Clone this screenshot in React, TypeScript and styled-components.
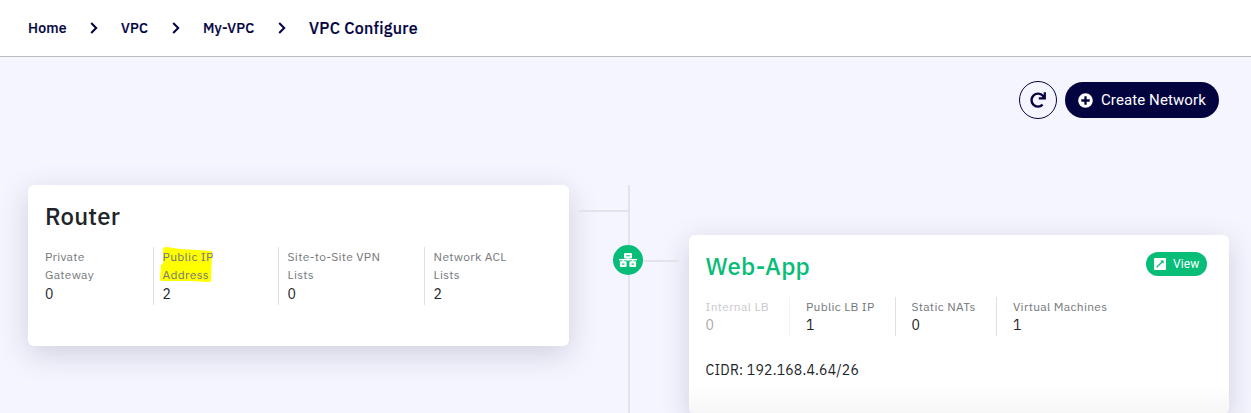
import React from "react";
import styled, { createGlobalStyle } from "styled-components";
import { FaPlusCircle } from "react-icons/fa";

const navy = "#03033f";
const green = "#07bd78";

const GlobalStyle = createGlobalStyle`
  * { box-sizing: border-box; }
  html, body { margin: 0; padding: 0; overflow: hidden; }
  body { font-family: "IBM Plex Sans", Roboto, "Noto Sans", sans-serif; }
`;

const Page = styled.div`
  height: 413px;
  overflow: hidden;
  background: #f5f5ff;
  color: #212529;
`;

const Header = styled.header`
  height: 57px;
  padding-left: 28px;
  display: flex;
  align-items: center;
  background: #fff;
  border-bottom: 1px solid #bdbdc0;
  color: ${navy};
`;

const Crumb = styled.span<{ $width: number; $current?: boolean }>`
  width: ${(p) => p.$width}px;
  font-size: ${(p) => (p.$current ? 16 : 14)}px;
  font-weight: 500;
  line-height: 20px;
  letter-spacing: ${(p) => (p.$current ? 0.3 : 0.2)}px;
  white-space: nowrap;
  -webkit-text-stroke: 0.2px ${navy};
`;

const Chevron = styled.svg`
  width: 8px;
  height: 12px;
  margin: 0 23px;
  flex: none;
`;

const Toolbar = styled.div`
  height: 128px;
  padding: 24px 32px 0 0;
  display: flex;
  justify-content: flex-end;
  gap: 8px;
`;

const RefreshButton = styled.button`
  width: 38px;
  height: 38px;
  padding: 0;
  display: grid;
  place-items: center;
  border: 1px solid ${navy};
  border-radius: 50%;
  background: transparent;
`;

const CreateButton = styled.button`
  width: 154px;
  height: 36px;
  margin-top: 1px;
  padding: 0 0 0 13px;
  display: flex;
  align-items: center;
  gap: 8px;
  border: 0;
  border-radius: 18px;
  background: ${navy};
  color: #fff;
  font: 400 15px Roboto, sans-serif;
  letter-spacing: 0.1px;
  white-space: nowrap;
`;

const Diagram = styled.main`
  padding-left: 28px;
  display: flex;
  align-items: flex-start;
`;

const Card = styled.section<{ $offset?: boolean }>`
  flex: none;
  width: ${(p) => (p.$offset ? 540 : 541)}px;
  height: ${(p) => (p.$offset ? 179 : 161)}px;
  margin-top: ${(p) => (p.$offset ? 50 : 0)}px;
  padding: 17px 22px 0 ${(p) => (p.$offset ? 16.6 : 17)}px;
  border-radius: 6px;
  background: ${(p) =>
    p.$offset ? "linear-gradient(#fff 150px, #f6f6f6 179px)" : "#fff"};
  box-shadow: 0 8px 30px rgba(30, 30, 60, 0.17);
`;

const CardHead = styled.div`
  height: 45px;
  display: flex;
  justify-content: space-between;
  align-items: flex-start;
`;

const Title = styled.h2<{ $color?: string }>`
  margin: -1px 0 0;
  font-size: 24px;
  font-weight: 500;
  line-height: 30px;
  letter-spacing: 0.2px;
  color: ${(p) => p.$color ?? "#212529"};
`;

const ViewButton = styled.button`
  width: 61px;
  height: 24px;
  padding: 0 0 0 8px;
  display: flex;
  align-items: center;
  gap: 7px;
  border: 0;
  border-radius: 12px;
  background: ${green};
  color: #fff;
  font: 400 12px Roboto, sans-serif;
  letter-spacing: 0.1px;
`;

const Stats = styled.div`
  display: flex;
`;

const Stat = styled.div<{ $width: number; $inset: number; $muted?: boolean; $last?: boolean }>`
  width: ${(p) => p.$width}px;
  padding-left: ${(p) => p.$inset}px;
  border-right: ${(p) => (p.$last ? 0 : 1)}px solid #e1e1e4;
  opacity: ${(p) => (p.$muted ? 0.4 : 1)};
`;

const Label = styled.div`
  padding-top: 1px;
  font-size: 12px;
  line-height: 18px;
  letter-spacing: 0.3px;
  color: #74777b;
  white-space: pre-line;
`;

const Value = styled.div<{ $low?: boolean }>`
  padding: ${(p) => (p.$low ? "1px 0" : "0 0 1px")};
  font-size: 14px;
  line-height: 19px;
  letter-spacing: 0.2px;
`;

const Highlighted = styled.div`
  position: relative;
  isolation: isolate;
`;

const Marker = styled.svg`
  position: absolute;
  z-index: -1;
  left: -3px;
  top: 0;
  width: 54px;
  height: 36px;
`;

const Cidr = styled.div`
  margin-top: 24px;
  font-size: 14px;
  line-height: 20px;
  letter-spacing: 0.2px;
`;

const Connector = styled.div`
  position: relative;
  flex: none;
  width: 120px;
  height: 228px;
`;

const Lines = styled.svg`
  display: block;
  width: 120px;
  height: 228px;
`;

const Badge = styled.div`
  position: absolute;
  left: 44px;
  top: 60px;
  width: 30px;
  height: 30px;
  display: grid;
  place-items: center;
  border-radius: 50%;
  background: ${green};
  color: #fff;
`;

function Separator() {
  return (
    <Chevron viewBox="0 0 8 12" fill="none" stroke={navy} strokeWidth="2">
      <path d="M1.2 1 6.2 6l-5 5" />
    </Chevron>
  );
}

function NetworkIcon() {
  return (
    <svg width="18" height="16" viewBox="0 0 18 16" fill="none" stroke="#fff">
      <path d="M6.1 2.1h5.8v3.3H6.1ZM2 10.4h4.5v3.5H2ZM11.5 10.4H16v3.5h-4.5Z" strokeWidth="2.2" strokeLinejoin="round" />
      <path d="M9 5.5v3M4.2 7.5v2M13.8 7.5v2" strokeWidth="1.5" />
      <path d="M0 7.7h18" strokeWidth="1.5" />
    </svg>
  );
}

function OpenIcon() {
  return (
    <svg width="12" height="12" viewBox="0 0 12 12" fill="none">
      <rect width="12" height="12" rx="1" fill="#fff" />
      <path d="M2.7 9.3 9 3" stroke={green} strokeWidth="1.3" />
      <path d="M6.2 2.4h3.4v3.4Z" fill={green} />
    </svg>
  );
}

export default function App() {
  return (
    <Page>
      <GlobalStyle />
      <Header>
        <Crumb $width={39}>Home</Crumb>
        <Separator />
        <Crumb $width={28}>VPC</Crumb>
        <Separator />
        <Crumb $width={52}>My-VPC</Crumb>
        <Separator />
        <Crumb $width={112} $current>VPC Configure</Crumb>
      </Header>
      <Toolbar>
        <RefreshButton aria-label="Refresh">
          <svg width="20" height="20" viewBox="0 0 20 20" fill="none" stroke={navy} strokeWidth="2.4">
            <path d="M14.6 14.7A6.5 6.5 0 1 1 14.9 5.8L16 7.6" />
            <path d="M16.8 2.2V8.3H10.8" strokeWidth="2.2" />
          </svg>
        </RefreshButton>
        <CreateButton>
          <FaPlusCircle size={15} />
          Create Network
        </CreateButton>
      </Toolbar>
      <Diagram>
        <Card>
          <CardHead>
            <Title>Router</Title>
          </CardHead>
          <Stats>
            <Stat $width={109} $inset={0}>
              <Label>{"Private\nGateway"}</Label>
              <Value $low>0</Value>
            </Stat>
            <Stat $width={125} $inset={8.6}>
              <Highlighted>
                <Marker viewBox="0 0 54 36">
                  <path d="M3 2Q3 0 6 0l14 2 17 1 15 1-1 30q0 1-3 1l-18-1-27 0Q0 34 0 32L1 18q0-1 2-1Z" fill="#ff0" />
                </Marker>
                <Label>{"Public IP\nAddress"}</Label>
              </Highlighted>
              <Value $low>2</Value>
            </Stat>
            <Stat $width={146} $inset={8.6}>
              <Label>{"Site-to-Site VPN\nLists"}</Label>
              <Value $low>0</Value>
            </Stat>
            <Stat $width={120} $inset={8.6} $last>
              <Label>{"Network ACL\nLists"}</Label>
              <Value $low>2</Value>
            </Stat>
          </Stats>
        </Card>
        <Connector>
          <Lines viewBox="0 0 120 228" stroke="#e3e3e9" strokeWidth="2">
            <path d="M60 0V228M9 26H60M74 76H110" />
          </Lines>
          <Badge>
            <NetworkIcon />
          </Badge>
        </Connector>
        <Card $offset>
          <CardHead>
            <Title $color={green}>Web-App</Title>
            <ViewButton>
              <OpenIcon />
              View
            </ViewButton>
          </CardHead>
          <Stats>
            <Stat $width={84.4} $inset={0} $muted>
              <Label>Internal LB</Label>
              <Value>0</Value>
            </Stat>
            <Stat $width={106} $inset={16}>
              <Label>Public LB IP</Label>
              <Value>1</Value>
            </Stat>
            <Stat $width={101} $inset={15.4}>
              <Label>Static NATs</Label>
              <Value>0</Value>
            </Stat>
            <Stat $width={130} $inset={16} $last>
              <Label>Virtual Machines</Label>
              <Value>1</Value>
            </Stat>
          </Stats>
          <Cidr>CIDR: 192.168.4.64/26</Cidr>
        </Card>
      </Diagram>
    </Page>
  );
}
